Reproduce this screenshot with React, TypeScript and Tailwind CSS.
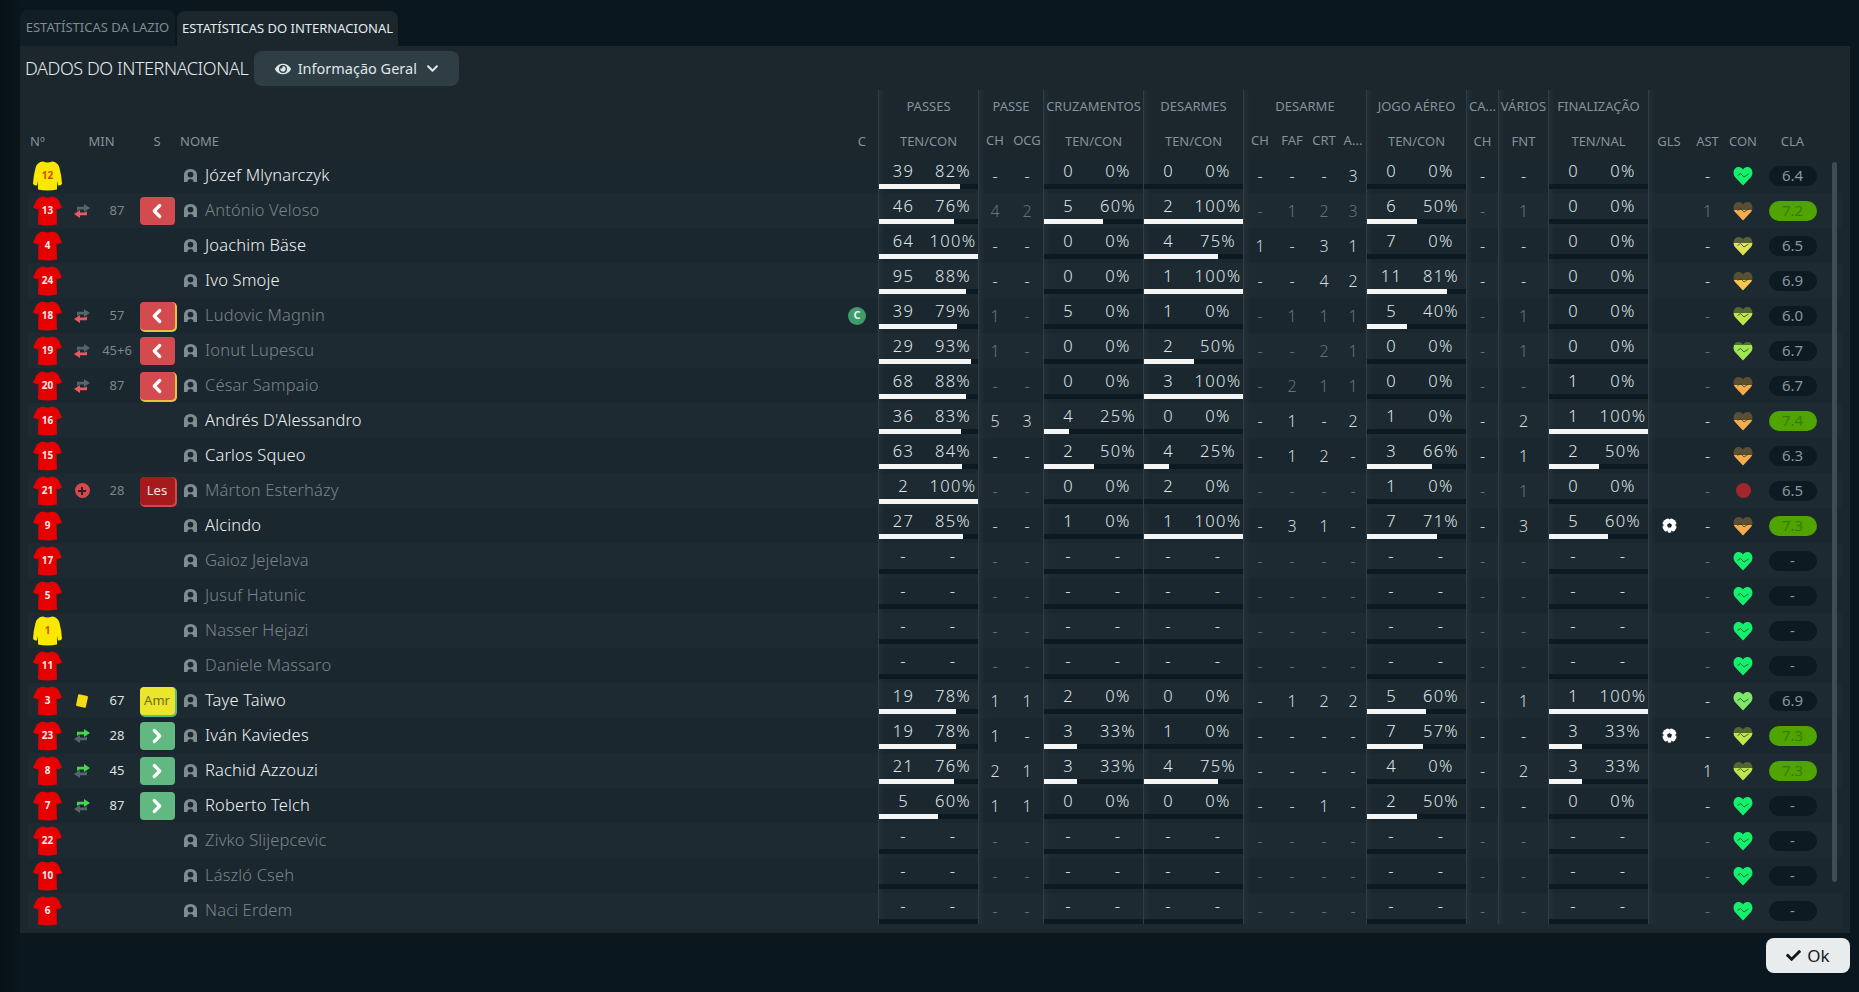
import { ChevronLeft, ChevronRight } from 'lucide-react'
import { FaCheck, FaChevronDown, FaEye } from 'react-icons/fa'

type Player = {
  n: number
  name: string
  gk?: boolean
  dim?: boolean
  ev?: 'out' | 'in' | 'inj' | 'card'
  min?: string
  s?: 'out' | 'outY' | 'in' | 'les' | 'amr'
  cap?: boolean
  st?: string
  gol?: boolean
  con?: [string, string, number]
  cla?: string
}

const GREEN: [string, string, number] = ['#14f06c', '#14f06c', 0]
const ORANGE: [string, string, number] = ['#f7ab4c', '#595033', 45]
const AMBER: [string, string, number] = ['#f8c64c', '#595033', 45]
const YELLOW: [string, string, number] = ['#dfe352', '#5c5f36', 30]
const LIME: [string, string, number] = ['#bfe44e', '#55652f', 30]
const SOFT: [string, string, number] = ['#9fe650', '#4f7030', 15]
const MINT: [string, string, number] = ['#7fe868', '#7fe868', 0]

const EMPTY = '-/- - - -/- -/- - - - - -/- - - -/- -'

const players: Player[] = [
  { n: 12, name: 'Józef Mlynarczyk', gk: true, st: '39/82 - - 0/0 0/0 - - - 3 0/0 - - 0/0 -', con: GREEN, cla: '6.4' },
  { n: 13, name: 'António Veloso', dim: true, ev: 'out', min: '87', s: 'out', st: '46/76 4 2 5/60 2/100 - 1 2 3 6/50 - 1 0/0 1', con: ORANGE, cla: '7.2' },
  { n: 4, name: 'Joachim Bäse', st: '64/100 - - 0/0 4/75 1 - 3 1 7/0 - - 0/0 -', con: YELLOW, cla: '6.5' },
  { n: 24, name: 'Ivo Smoje', st: '95/88 - - 0/0 1/100 - - 4 2 11/81 - - 0/0 -', con: AMBER, cla: '6.9' },
  { n: 18, name: 'Ludovic Magnin', dim: true, ev: 'out', min: '57', s: 'outY', cap: true, st: '39/79 1 - 5/0 1/0 - 1 1 1 5/40 - 1 0/0 -', con: LIME, cla: '6.0' },
  { n: 19, name: 'Ionut Lupescu', dim: true, ev: 'out', min: '45+6', s: 'out', st: '29/93 1 - 0/0 2/50 - - 2 1 0/0 - 1 0/0 -', con: SOFT, cla: '6.7' },
  { n: 20, name: 'César Sampaio', dim: true, ev: 'out', min: '87', s: 'outY', st: '68/88 - - 0/0 3/100 - 2 1 1 0/0 - - 1/0 -', con: ORANGE, cla: '6.7' },
  { n: 16, name: "Andrés D'Alessandro", st: '36/83 5 3 4/25 0/0 - 1 - 2 1/0 - 2 1/100 -', con: ORANGE, cla: '7.4' },
  { n: 15, name: 'Carlos Squeo', st: '63/84 - - 2/50 4/25 - 1 2 - 3/66 - 1 2/50 -', con: ORANGE, cla: '6.3' },
  { n: 21, name: 'Márton Esterházy', dim: true, ev: 'inj', min: '28', s: 'les', st: '2/100 - - 0/0 2/0 - - - - 1/0 - 1 0/0 -', cla: '6.5' },
  { n: 9, name: 'Alcindo', st: '27/85 - - 1/0 1/100 - 3 1 - 7/71 - 3 5/60 -', gol: true, con: ORANGE, cla: '7.3' },
  { n: 17, name: 'Gaioz Jejelava', dim: true, con: GREEN },
  { n: 5, name: 'Jusuf Hatunic', dim: true, con: GREEN },
  { n: 1, name: 'Nasser Hejazi', gk: true, dim: true, con: GREEN },
  { n: 11, name: 'Daniele Massaro', dim: true, con: GREEN },
  { n: 3, name: 'Taye Taiwo', ev: 'card', min: '67', s: 'amr', st: '19/78 1 1 2/0 0/0 - 1 2 2 5/60 - 1 1/100 -', con: MINT, cla: '6.9' },
  { n: 23, name: 'Iván Kaviedes', ev: 'in', min: '28', s: 'in', st: '19/78 1 - 3/33 1/0 - - - - 7/57 - - 3/33 -', gol: true, con: LIME, cla: '7.3' },
  { n: 8, name: 'Rachid Azzouzi', ev: 'in', min: '45', s: 'in', st: '21/76 2 1 3/33 4/75 - - - - 4/0 - 2 3/33 1', con: LIME, cla: '7.3' },
  { n: 7, name: 'Roberto Telch', ev: 'in', min: '87', s: 'in', st: '5/60 1 1 0/0 0/0 - - 1 - 2/50 - - 0/0 -', con: GREEN },
  { n: 22, name: 'Zivko Slijepcevic', dim: true, con: GREEN },
  { n: 10, name: 'László Cseh', dim: true, con: GREEN },
  { n: 6, name: 'Naci Erdem', dim: true, con: GREEN },
]

const groupLine = 'border-l border-[#303d44] bg-[linear-gradient(90deg,#222f36,transparent_6px)]'

function Shirt({ n, gk }: { n: number; gk?: boolean }) {
  const fill = gk ? '#fbe800' : '#e60000'
  return (
    <svg width="29" height="30" viewBox="0 0 29 30">
      {gk ? (
        <path
          fill={fill}
          d="M10 0.5 Q14.5 2.5 19 0.5 Q25 1 26.5 7 Q28.5 14 29 23 Q27 25 25 24.5 L24 20 L24 28.5 Q14.5 30.5 5 28.5 L5 20 L4 24.5 Q2 25 0 23 Q0.5 14 2.5 7 Q4 1 10 0.5 Z"
        />
      ) : (
        <path
          fill={fill}
          d="M10 0.5 Q14.5 2.5 19 0.5 Q24 1 26 5 L29 11.5 L24.5 13.5 L23.5 12 L24 28.5 Q14.5 30.5 5 28.5 L5.5 12 L4.5 13.5 L0 11.5 L3 5 Q5 1 10 0.5 Z"
        />
      )}
      <text
        x="14.5"
        y="17.5"
        textAnchor="middle"
        fontSize="10"
        fontWeight="700"
        fill={gk ? '#d9480f' : '#ffe9e9'}
        fontFamily="'Noto Sans', sans-serif"
      >
        {n}
      </text>
    </svg>
  )
}

function Swap({ top, bottom }: { top: string; bottom: string }) {
  return (
    <svg width="16" height="14" viewBox="0 0 16 14">
      <path fill={top} d="M3 2.8 H10 V0 L16 4 L10 8 V5.6 H5.5 L3 7 Z" />
      <path fill={bottom} d="M13 11.2 H6 V14 L0 10 L6 6 V8.4 H10.5 L13 7.4 Z" />
    </svg>
  )
}

function Ball() {
  return (
    <svg width="15" height="15" viewBox="0 0 15 15">
      <circle cx="7.5" cy="7.5" r="7.3" fill="#fff" />
      <path fill="#1b272e" d="M7.5 4.9 L10 6.7 L9 9.6 H6 L5 6.7 Z" />
      <path fill="#1b272e" d="M5.8 0 H9.2 L7.5 1.5 Z M15 5.2 L14.9 9 L13.1 7 Z M11.8 14.2 L8.8 15 L9.5 12.6 Z M3.2 14.2 L6.2 15 L5.5 12.6 Z M0 5.2 L0.1 9 L1.9 7 Z" />
    </svg>
  )
}

function EventIcon({ ev }: { ev: Player['ev'] }) {
  if (ev === 'out') return <Swap top="#55656c" bottom="#e85a60" />
  if (ev === 'in') return <Swap top="#44d651" bottom="#55656c" />
  if (ev === 'card') return <div className="h-[12px] w-[10px] rotate-[12deg] rounded-[1px] bg-[#f7d916]" />
  if (ev === 'inj')
    return (
      <div className="relative h-[15px] w-[15px] rounded-full bg-[#d5494d]">
        <div className="absolute top-[6.5px] left-[3.5px] h-[2px] w-[8px] bg-[#3a1c20]" />
        <div className="absolute top-[3.5px] left-[6.5px] h-[8px] w-[2px] bg-[#3a1c20]" />
      </div>
    )
  return null
}

function StateBtn({ s }: { s: Player['s'] }) {
  const base = 'flex h-[28px] w-[35px] items-center justify-center rounded-[4px]'
  if (s === 'out')
    return (
      <div className={`${base} bg-[#d34b4f]`}>
        <ChevronLeft size={22} strokeWidth={3.5} color="#fff" />
      </div>
    )
  if (s === 'outY')
    return (
      <div className={`${base} bg-[#d34b4f] shadow-[1px_1px_0_1px_#e6c33d]`}>
        <ChevronLeft size={22} strokeWidth={3.5} color="#fff" />
      </div>
    )
  if (s === 'in')
    return (
      <div className={`${base} bg-[#61b981]`}>
        <ChevronRight size={22} strokeWidth={3.5} color="#fff" />
      </div>
    )
  if (s === 'les')
    return (
      <div className={`${base} bg-[#a61a1d] text-[13px] text-[#f3e3e3] shadow-[1px_1px_0_1px_#d0484c]`}>Les</div>
    )
  if (s === 'amr')
    return (
      <div className={`${base} bg-[#ebe52c] text-[13px] text-[#6f6c1e] shadow-[1px_1px_0_1px_#61b981]`}>Amr</div>
    )
  return null
}

function Avatar() {
  return (
    <svg width="13" height="13" viewBox="0 0 13 13">
      <path fill="#7f8c92" d="M0 13 V6.5 Q0 0 6.5 0 Q13 0 13 6.5 V13 H9.5 Q9.5 10 6.5 10 Q3.5 10 3.5 13 Z" />
      <circle cx="6.5" cy="5.6" r="2.9" fill="#1b272e" />
    </svg>
  )
}

function Heart({ id, con }: { id: number; con: [string, string, number] }) {
  const [fill, top, cut] = con
  return (
    <svg width="20" height="20" viewBox="0 0 20 20">
      <defs>
        <linearGradient id={`heart-${id}`} x1="0" y1="0" x2="0" y2="1">
          <stop offset={`${cut}%`} stopColor={top} />
          <stop offset={`${cut}%`} stopColor={fill} />
        </linearGradient>
      </defs>
      <path
        fill={`url(#heart-${id})`}
        d="M10 19.5 L2 11 C-0.8 7.6 0.6 1.4 5.2 1 C7.4 0.8 9 2 10 3.4 C11 2 12.6 0.8 14.8 1 C19.4 1.4 20.8 7.6 18 11 Z"
      />
      <path fill="none" stroke="#1b3a30" strokeOpacity="0.75" strokeWidth="1" d="M4.5 9.5 L7.5 7.5 L11 11 L15.5 8" />
    </svg>
  )
}

function Pair({ value, last }: { value: string; last: boolean }) {
  const [ten, pct] = value.split('/')
  const w = pct === '-' ? 0 : Number(pct)
  return (
    <div className={`w-[100px] ${groupLine} ${last ? 'h-[31px]' : 'h-[35px]'}`}>
      <div className="flex h-[26px] items-center pt-[1px] text-[16.5px] font-[350] tracking-[0.08em] text-[#dfe6e8]">
        <span className="w-[49px] text-center">{ten}</span>
        <span className="w-[50px] text-center">{pct === '-' ? '-' : `${pct}%`}</span>
      </div>
      <div className="h-[5px] bg-[#0e1a21]">
        <div className="h-full bg-[#f4f6f6]" style={{ width: `${w}%` }} />
      </div>
    </div>
  )
}

function One({ v, w, color }: { v: string; w: string; color: string }) {
  return <div className={`flex h-[35px] items-center justify-center text-[16px] font-[350] ${w} ${color}`}>{v}</div>
}

function Row({ p, i }: { p: Player; i: number }) {
  const t = (p.st ?? EMPTY).split(' ')
  const last = i === players.length - 1
  const tone = p.dim ? 'text-[#66747a]' : 'text-[#d3dbde]'
  const h = last ? 'h-[31px]' : 'h-[35px]'
  const rate = Number(p.cla ?? 0)
  return (
    <div className={`flex h-[35px] items-start ${i % 2 ? 'bg-[#1e2a31]' : 'bg-[#1b272e]'}`}>
      <div className="flex h-[35px] w-[38px] items-center justify-center">
        <Shirt n={p.n} gk={p.gk} />
      </div>
      <div className="flex h-[35px] w-[32px] items-center justify-center">
        <EventIcon ev={p.ev} />
      </div>
      <div
        className={`flex h-[35px] w-[38px] items-center justify-center text-[13px] ${
          p.dim ? 'text-[#7a888e]' : 'text-[#dbe2e4]'
        }`}
      >
        {p.min}
      </div>
      <div className="flex h-[35px] w-[42px] items-center justify-center">
        <StateBtn s={p.s} />
      </div>
      <div className="flex h-[35px] w-[670px] items-center gap-[8px] pl-[6px]">
        <Avatar />
        <span
          className={`pb-[1px] text-[16.5px] font-[350] tracking-[0.15px] ${p.dim ? 'text-[#77858b]' : 'text-[#eef2f3]'}`}
        >
          {p.name}
        </span>
      </div>
      <div className="flex h-[35px] w-[30px] items-center">
        {p.cap && (
          <div className="flex h-[18px] w-[18px] items-center justify-center rounded-full bg-[#3f9a6c] text-[11px] font-bold text-[#e8f5ee]">
            C
          </div>
        )}
      </div>
      <Pair value={t[0]} last={last} />
      <div className={`flex w-[65px] ${groupLine} ${h}`}>
        <One v={t[1]} w="w-[32px]" color={tone} />
        <One v={t[2]} w="w-[32px]" color={tone} />
      </div>
      <Pair value={t[3]} last={last} />
      <Pair value={t[4]} last={last} />
      <div className={`flex w-[123px] ${groupLine} ${h}`}>
        <One v={t[5]} w="w-[32px]" color={tone} />
        <One v={t[6]} w="w-[32px]" color={tone} />
        <One v={t[7]} w="w-[32px]" color={tone} />
        <One v={t[8]} w="w-[26px]" color={tone} />
      </div>
      <Pair value={t[9]} last={last} />
      <div className={`w-[32px] ${groupLine} ${h}`}>
        <One v={t[10]} w="w-full" color={tone} />
      </div>
      <div className={`w-[50px] ${groupLine} ${h}`}>
        <One v={t[11]} w="w-full" color={tone} />
      </div>
      <Pair value={t[12]} last={last} />
      <div className={`flex w-[41px] items-center justify-center ${groupLine} ${h}`}>
        {p.gol && <Ball />}
      </div>
      <One v={t[13]} w="w-[37px]" color={tone} />
      <div className="flex h-[35px] w-[34px] items-center justify-center">
        {p.con ? <Heart id={i} con={p.con} /> : <div className="h-[15px] w-[15px] rounded-full bg-[#a3262b]" />}
      </div>
      <div className="flex h-[35px] w-[65px] items-center justify-center">
        <div
          className={`flex h-[20px] w-[48px] items-center justify-center rounded-full text-[15px] ${
            rate >= 7.2 ? 'bg-[#4fa400] text-[#3b7a10]' : 'bg-[#0c1a22] text-[#8a979d]'
          }`}
        >
          {p.cla ?? '-'}
        </div>
      </div>
    </div>
  )
}

function Head({ w, children, line }: { w: string; children?: React.ReactNode; line?: boolean }) {
  return (
    <div className={`flex h-[34px] items-center justify-center whitespace-nowrap ${w} ${line ? groupLine : ''}`}>
      {children}
    </div>
  )
}

export default function App() {
  return (
    <div className="h-[992px] overflow-hidden bg-[linear-gradient(90deg,#061016,#0b171e_24px)] pt-[10px] pl-[20px] font-['Noto_Sans','Liberation_Sans',sans-serif]">
      <div className="flex h-[36px] items-end text-[13px] uppercase">
        <div className="flex h-[36px] w-[155px] items-center justify-center rounded-t-lg bg-[#121e25] text-[#7f8d93]">
          Estatísticas da Lazio
        </div>
        <div className="ml-[2px] flex h-[35px] w-[221px] items-center justify-center rounded-t-lg bg-[#1b262d] text-[#e6ecee]">
          Estatísticas do Internacional
        </div>
      </div>

      <div className="relative h-[887px] w-[1830px] bg-[#1b262d] px-[8px] pt-[5px]">
        <div className="flex h-[35px] items-center">
          <span className="-ml-[3px] text-[18px] font-[350] tracking-[-0.42px] text-[#e6ecee] uppercase">
            Dados do Internacional
          </span>
          <button className="ml-[6px] flex h-[35px] w-[205px] items-center justify-center gap-[7px] rounded-lg bg-[#2f3d44] text-[14.5px] text-[#dfe6e8]">
            <FaEye size={16} />
            Informação Geral
            <FaChevronDown size={13} className="ml-[2px]" />
          </button>
        </div>

        <div className="mt-[4px] text-[13px] text-[#84929a]">
          <div className="flex">
            <div className="w-[850px]" />
            <Head w="w-[100px]" line>PASSES</Head>
            <Head w="w-[65px]" line>PASSE</Head>
            <Head w="w-[100px]" line>CRUZAMENTOS</Head>
            <Head w="w-[100px]" line>DESARMES</Head>
            <Head w="w-[123px]" line>DESARME</Head>
            <Head w="w-[100px]" line>JOGO AÉREO</Head>
            <Head w="w-[32px]" line>CA...</Head>
            <Head w="w-[50px]" line>VÁRIOS</Head>
            <Head w="w-[100px]" line>FINALIZAÇÃO</Head>
            <Head w="w-[177px]" line />
          </div>
          <div className="flex [&>div>span]:pt-[2px] [&_span]:block">
            <div className="flex h-[34px] w-[38px] items-center pl-[2px]"><span>Nº</span></div>
            <Head w="w-[70px]"><span className="pl-[1px]">MIN</span></Head>
            <Head w="w-[42px]"><span>S</span></Head>
            <div className="flex h-[34px] w-[670px] items-center pl-[2px]"><span>NOME</span></div>
            <div className="flex h-[34px] w-[30px] items-center justify-end pr-[12px]"><span>C</span></div>
            <Head w="w-[100px]" line><span>TEN/CON</span></Head>
            <div className={`flex w-[65px] ${groupLine}`}>
              <Head w="w-[32px]"><span>CH</span></Head>
              <Head w="w-[32px]"><span>OCG</span></Head>
            </div>
            <Head w="w-[100px]" line><span>TEN/CON</span></Head>
            <Head w="w-[100px]" line><span>TEN/CON</span></Head>
            <div className={`flex w-[123px] ${groupLine}`}>
              <Head w="w-[32px]"><span>CH</span></Head>
              <Head w="w-[32px]"><span>FAF</span></Head>
              <Head w="w-[32px]"><span>CRT</span></Head>
              <Head w="w-[26px]"><span>A...</span></Head>
            </div>
            <Head w="w-[100px]" line><span>TEN/CON</span></Head>
            <Head w="w-[32px]" line><span>CH</span></Head>
            <Head w="w-[50px]" line><span>FNT</span></Head>
            <Head w="w-[100px]" line><span>TEN/NAL</span></Head>
            <Head w="w-[41px]" line><span>GLS</span></Head>
            <Head w="w-[37px]"><span>AST</span></Head>
            <Head w="w-[34px]"><span>CON</span></Head>
            <Head w="w-[65px]"><span>CLA</span></Head>
          </div>
        </div>

        <div>
          {players.map((p, i) => (
            <Row key={p.n} p={p} i={i} />
          ))}
        </div>

        <div className="absolute top-[116px] right-[13px] h-[720px] w-[5px] rounded-full bg-[#3e4c54]" />
      </div>

      <div className="flex w-[1830px] justify-end pt-[5px]">
        <button className="flex h-[35px] w-[84px] items-center justify-center gap-[6px] rounded-lg bg-[#e9ecec] text-[17px] text-[#111a1f]">
          <FaCheck size={15} />
          Ok
        </button>
      </div>
    </div>
  )
}
